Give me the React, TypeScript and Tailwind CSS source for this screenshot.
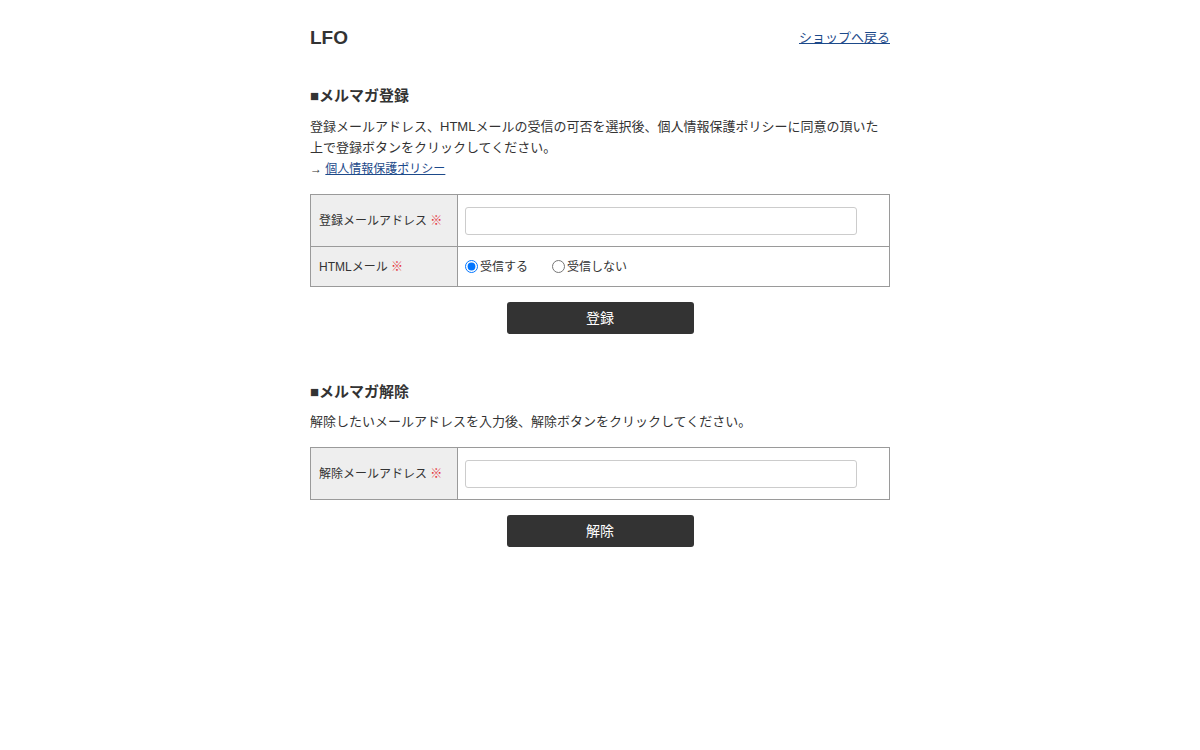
export default function App() {
  return (
    <div
      className="min-h-[750px] bg-white text-[#333]"
      style={{ fontFamily: '"Liberation Sans", "Noto Sans CJK JP", sans-serif' }}
    >
      <div className="mx-auto w-[580px] pt-[26px]">
        <header className="flex items-center justify-between">
          <h1 className="text-[19px] font-bold leading-[24px]">LFO</h1>
          <a href="#" className="text-[13px] leading-[20px] text-[#1d4a8a] underline">
            ショップへ戻る
          </a>
        </header>

        <section className="mt-[34px]">
          <h2 className="text-[15px] font-bold leading-[24px]">■メルマガ登録</h2>
          <p className="mt-[8px] text-[13px] leading-[21px]">
            登録メールアドレス、HTMLメールの受信の可否を選択後、個人情報保護ポリシーに同意の頂いた上で登録ボタンをクリックしてください。
          </p>
          <p className="mt-[1px] text-[12px] leading-[21px]">
            →{' '}
            <a href="#" className="text-[#1d4a8a] underline">
              個人情報保護ポリシー
            </a>
          </p>

          <table className="mt-[14px] w-full border-collapse text-[12px]">
            <tbody>
              <tr>
                <th className="h-[52px] w-[147px] border border-[#9a9a9a] bg-[#eee] pl-[8px] text-left font-normal">
                  登録メールアドレス <span className="text-[#e5333a]">※</span>
                </th>
                <td className="border border-[#9a9a9a] pl-[7px]">
                  <input
                    type="text"
                    className="block h-[28px] w-[392px] rounded-[3px] border border-[#ccc] bg-white px-2 text-[13px]"
                  />
                </td>
              </tr>
              <tr>
                <th className="h-[40px] border border-[#9a9a9a] bg-[#eee] pl-[8px] text-left font-normal">
                  HTMLメール <span className="text-[#e5333a]">※</span>
                </th>
                <td className="border border-[#9a9a9a] pl-[7px]">
                  <div className="flex items-center gap-[24px]">
                    <label className="flex items-center">
                      <input type="radio" name="html" defaultChecked className="m-0 mr-[2px] h-[13px] w-[13px]" />
                      受信する
                    </label>
                    <label className="flex items-center">
                      <input type="radio" name="html" className="m-0 mr-[2px] h-[13px] w-[13px]" />
                      受信しない
                    </label>
                  </div>
                </td>
              </tr>
            </tbody>
          </table>

          <div className="mt-[15px] flex justify-center">
            <button className="h-[32px] w-[187px] rounded-[3px] bg-[#333] text-[14px] text-white">登録</button>
          </div>
        </section>

        <section className="mt-[46px]">
          <h2 className="text-[15px] font-bold leading-[24px]">■メルマガ解除</h2>
          <p className="mt-[7px] text-[13px] leading-[21px]">
            解除したいメールアドレスを入力後、解除ボタンをクリックしてください。
          </p>

          <table className="mt-[15px] w-full border-collapse text-[12px]">
            <tbody>
              <tr>
                <th className="h-[52px] w-[147px] border border-[#9a9a9a] bg-[#eee] pl-[8px] text-left font-normal">
                  解除メールアドレス <span className="text-[#e5333a]">※</span>
                </th>
                <td className="border border-[#9a9a9a] pl-[7px]">
                  <input
                    type="text"
                    className="block h-[28px] w-[392px] rounded-[3px] border border-[#ccc] bg-white px-2 text-[13px]"
                  />
                </td>
              </tr>
            </tbody>
          </table>

          <div className="mt-[15px] flex justify-center">
            <button className="h-[32px] w-[187px] rounded-[3px] bg-[#333] text-[14px] text-white">解除</button>
          </div>
        </section>
      </div>
    </div>
  )
}
